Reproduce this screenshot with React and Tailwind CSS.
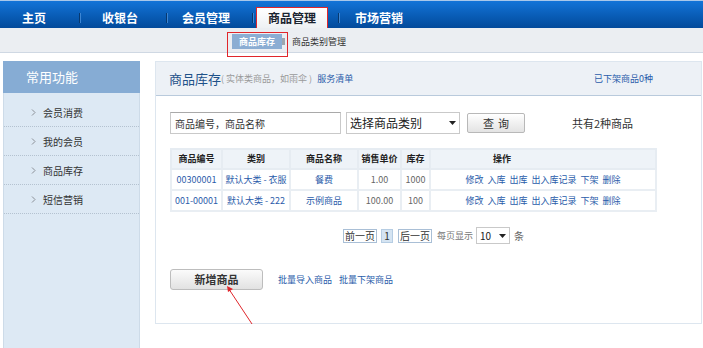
import React from 'react';

const sideItems = ['会员消费', '我的会员', '商品库存', '短信营销'];

const rows = [
  { code: '00300001', cat: '默认大类 - 衣服', name: '餐费', price: '1.00', stock: '1000' },
  { code: '001-00001', cat: '默认大类 - 222', name: '示例商品', price: '100.00', stock: '100' },
];

const actions = ['修改', '入库', '出库', '出入库记录', '下架', '删除'];

function NavSep() {
  return <div className="w-px h-[10px] mb-[5px] bg-[#06386f] shadow-[1px_0_0_#3d86d4]" />;
}

function Chevron() {
  return (
    <svg width="5" height="7" viewBox="0 0 5 7" className="shrink-0">
      <polyline points="1,0.5 4,3.5 1,6.5" fill="none" stroke="#8a8f96" strokeWidth="1" />
    </svg>
  );
}

function Caret() {
  return (
    <svg width="7" height="4" viewBox="0 0 7 4">
      <polygon points="0,0 7,0 3.5,4" fill="#222" />
    </svg>
  );
}

export default function App() {
  return (
    <div className="relative w-[703px] h-[348px] overflow-hidden bg-white text-[#333] font-['Noto_Sans_CJK_SC','Liberation_Sans',sans-serif]">
      {/* top nav */}
      <div className="flex items-end h-[28px] border-t border-[#a9c8ea] bg-linear-to-b from-[#1374d8] to-[#034a9b] text-[12px] font-bold text-white">
        <div className="w-[79px] h-[21px] flex items-center pl-[22px]">主页</div>
        <NavSep />
        <div className="w-[86px] h-[21px] flex items-center pl-[22px]">收银台</div>
        <NavSep />
        <div className="w-[85px] h-[21px] flex items-center pl-[15px]">会员管理</div>
        <NavSep />
        <div className="ml-[3px] w-[72px] h-[21px] flex items-center justify-center bg-linear-to-b from-[#ffffff] to-[#eef1f4] border border-[#e0262b] border-b-0 text-[#1b2430]">
          商品管理
        </div>
        <div className="ml-[10px]" />
        <NavSep />
        <div className="h-[21px] flex items-center pl-[16px]">市场营销</div>
      </div>

      {/* sub nav */}
      <div className="flex items-center h-[25px] pt-[3px] bg-[#ebeef2] border-b border-[#cfd8e3]">
        <div className="ml-[232px] w-[50px] h-[15px] flex items-center justify-center bg-[#8badd3] text-[9px] font-bold text-white leading-none">
          商品库存
        </div>
        <div className="w-[3px] h-[7px] bg-[#9ea6ae]" />
        <div className="ml-[7px] text-[9px] text-[#333] leading-none">商品类别管理</div>
      </div>
      <div className="absolute left-[227px] top-[32px] w-[61px] h-[25px] border border-[#e0262b]" />

      {/* body */}
      <div className="flex pl-[3px] pt-[8px]">
        {/* sidebar */}
        <div className="w-[137px] h-[287px] flex flex-col">
          <div className="h-[32px] flex items-center pl-[23px] bg-[#86acd4] text-[13px] text-white">常用功能</div>
          <div className="flex-1 bg-[#dde9f4] border-x border-[#cddbe8] pt-[5px]">
            {sideItems.map((t) => (
              <div key={t} className="h-[29px] flex items-center pl-[27px] border-b border-dotted border-[#b4c2d0]">
                <Chevron />
                <span className="ml-[7px] text-[10px] text-[#333]">{t}</span>
              </div>
            ))}
          </div>
        </div>

        {/* main panel */}
        <div className="ml-[15px] w-[547px] h-[263px] border border-[#dde6ef] flex flex-col">
          <div className="h-[34px] flex items-center pl-[13px] pr-[48px] bg-[#edf1f6] border-b border-[#b9cadc]">
            <span className="text-[13px] text-[#1f5289]">商品库存</span>
            <span className="text-[9px] text-[#9a9a9a]">( 实体类商品，如雨伞 )</span>
            <span className="ml-[5px] text-[9px] text-[#2a5caa]">服务清单</span>
            <span className="ml-auto text-[9px] text-[#2a5caa]">已下架商品0种</span>
          </div>

          <div className="px-[14px] pt-[16px]">
            {/* search row */}
            <div className="flex items-center h-[22px]">
              <div className="w-[171px] h-[22px] flex items-center pl-[4px] border border-[#c9c9c9] border-t-[#a9a9a9] text-[10px] text-[#333]">
                商品编号，商品名称
              </div>
              <div className="ml-[5px] w-[114px] h-[22px] flex items-center justify-between pl-[3px] pr-[3px] border border-[#c9c9c9] text-[12px] text-[#222]">
                <span>选择商品类别</span>
                <Caret />
              </div>
              <div className="ml-[7px] w-[58px] h-[20px] flex items-center justify-center rounded-[2px] border border-[#b8b8b8] bg-linear-to-b from-[#ffffff] to-[#e3e3e3] text-[11px] text-[#333] tracking-[4px] pl-[4px]">
                查询
              </div>
              <div className="ml-[47px] text-[11px] text-[#333]">共有2种商品</div>
            </div>

            {/* table */}
            <table className="mt-[14px] w-[487px] table-fixed border-collapse text-[9px]">
              <thead>
                <tr className="h-[20px] bg-[#eef3f8] text-[#222]">
                  <th className="w-[51px] border-2 border-[#e6ecf2] font-bold">商品编号</th>
                  <th className="w-[68px] border-2 border-[#e6ecf2] font-bold">类别</th>
                  <th className="w-[68px] border-2 border-[#e6ecf2] font-bold">商品名称</th>
                  <th className="w-[43px] border-2 border-[#e6ecf2] font-bold">销售单价</th>
                  <th className="w-[29px] border-2 border-[#e6ecf2] font-bold">库存</th>
                  <th className="border-2 border-[#e6ecf2] font-bold text-left pl-[62px]">操作</th>
                </tr>
              </thead>
              <tbody>
                {rows.map((r) => (
                  <tr key={r.code} className="h-[21px] text-center">
                    <td className="border-2 border-[#e9eef3] text-[#2a5caa]">{r.code}</td>
                    <td className="border-2 border-[#e9eef3] text-[#2a5caa] whitespace-nowrap">{r.cat}</td>
                    <td className="border-2 border-[#e9eef3] text-[#2a5caa]">{r.name}</td>
                    <td className="border-2 border-[#e9eef3] text-[#666]">{r.price}</td>
                    <td className="border-2 border-[#e9eef3] text-[#666]">{r.stock}</td>
                    <td className="border-2 border-[#e9eef3]">
                      <div className="flex justify-center gap-[4px] text-[#2a5caa]">
                        {actions.map((a) => (
                          <span key={a}>{a}</span>
                        ))}
                      </div>
                    </td>
                  </tr>
                ))}
              </tbody>
            </table>

            {/* pagination */}
            <div className="mt-[15px] h-[17px] flex items-center pl-[173px] text-[10px] leading-none">
              <div className="w-[34px] h-[14px] flex items-center justify-center border border-[#a9bfd6] text-[#333]">前一页</div>
              <div className="ml-[4px] w-[12px] h-[14px] flex items-center justify-center border border-[#b6cde3] bg-[#d5e4f2] text-[#333]">1</div>
              <div className="ml-[5px] w-[34px] h-[14px] flex items-center justify-center border border-[#a9bfd6] text-[#333]">后一页</div>
              <div className="ml-[5px] text-[9px] text-[#777]">每页显示</div>
              <div className="ml-[3px] w-[34px] h-[17px] flex items-center justify-between pl-[3px] pr-[3px] border border-[#c9c9c9] text-[10px] text-[#222]">
                <span>10</span>
                <Caret />
              </div>
              <div className="ml-[4px] text-[10px] text-[#666]">条</div>
            </div>

            {/* bottom actions */}
            <div className="mt-[25px] flex items-center">
              <div className="w-[93px] h-[21px] flex items-center justify-center rounded-[3px] border border-[#bdbdbd] bg-linear-to-b from-[#fbfbfb] to-[#e2e2e2] text-[11px] font-bold text-[#333]">
                新增商品
              </div>
              <span className="ml-[15px] text-[9px] text-[#2a5caa]">批量导入商品</span>
              <span className="ml-[7px] text-[9px] text-[#2a5caa]">批量下架商品</span>
            </div>
          </div>
        </div>
      </div>

      {/* annotation arrow */}
      <svg className="absolute left-0 top-0 pointer-events-none" width="703" height="348">
        <line x1="252" y1="324" x2="229.5" y2="290" stroke="#e0262b" strokeWidth="1" />
        <polygon points="227,286 233,289 228,292" fill="#e0262b" />
      </svg>
    </div>
  );
}
